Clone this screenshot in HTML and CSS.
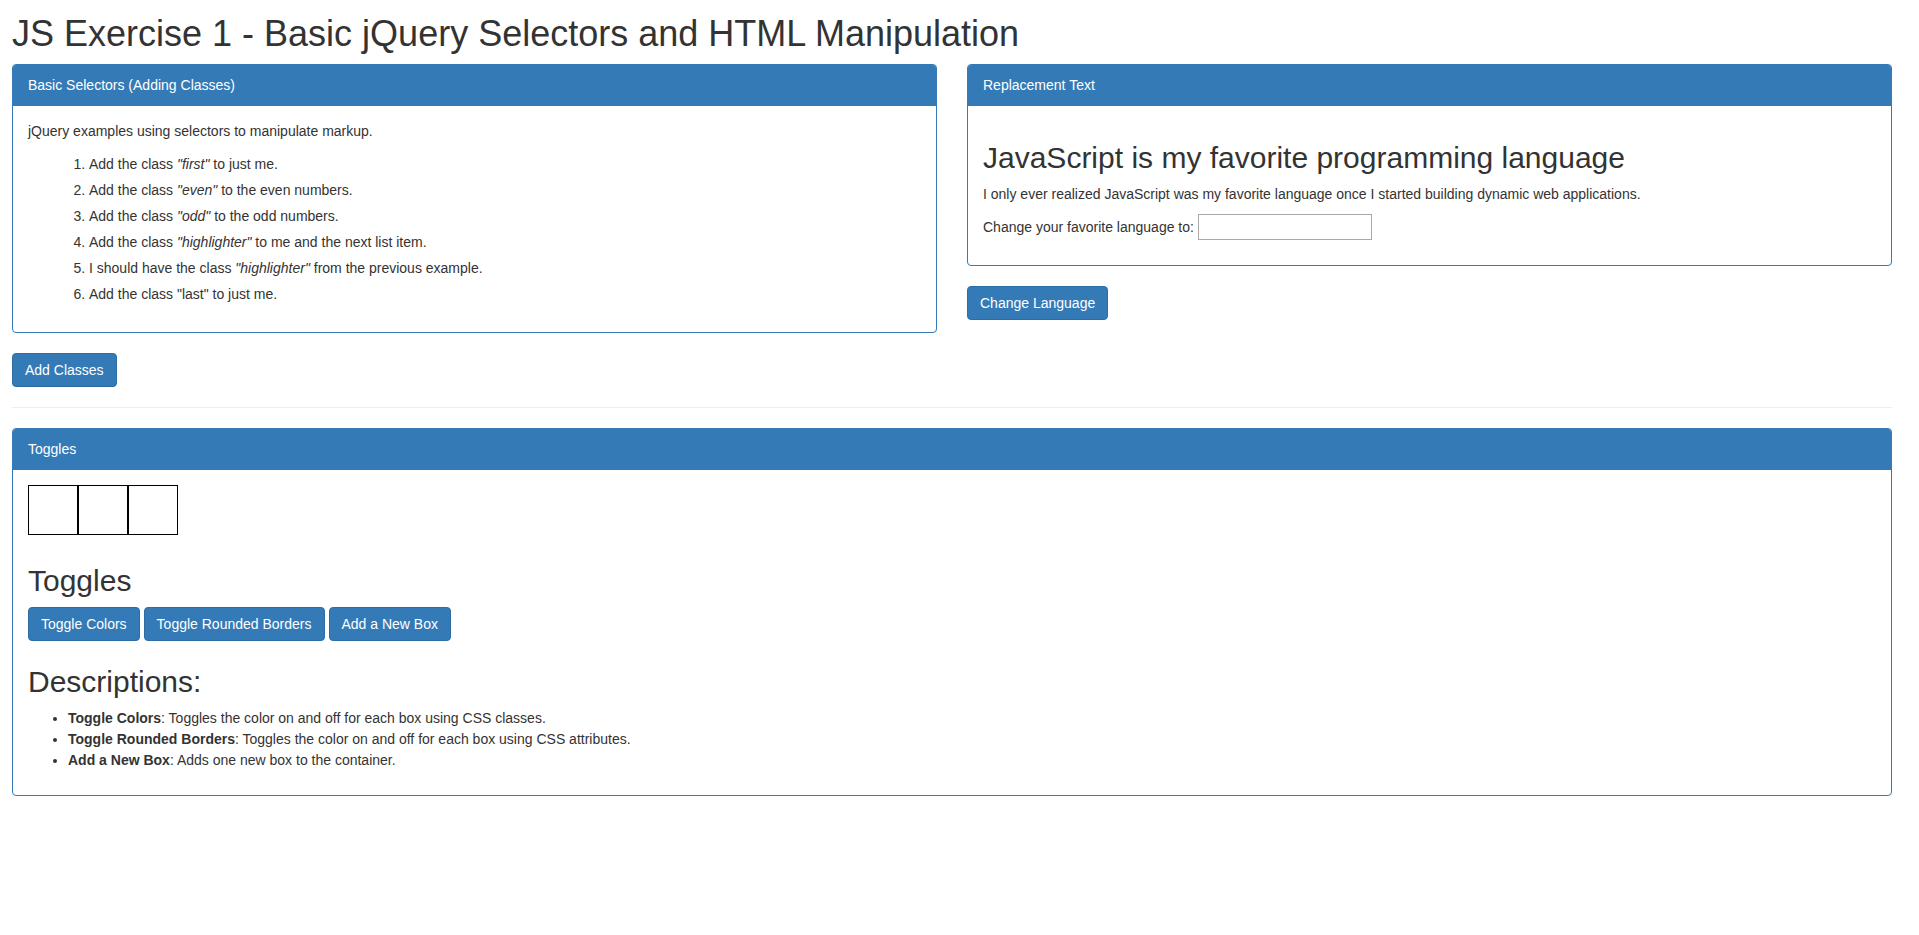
FILE: index.html
```html
<!DOCTYPE html>
<html lang="en">
<head>
<meta charset="utf-8">
<title>JS Exercise 1</title>
<link rel="stylesheet" href="styles.css">
</head>
<body>
<div class="page">
  <h1 class="title">JS Exercise 1 - Basic jQuery Selectors and HTML Manipulation</h1>
  <div class="row">
    <div class="col">
      <div class="panel">
        <div class="panel-heading">Basic Selectors (Adding Classes)</div>
        <div class="panel-body">
          <p class="intro">jQuery examples using selectors to manipulate markup.</p>
          <ol class="steps">
            <li>Add the class <em>"first"</em> to just me.</li>
            <li>Add the class <em>"even"</em> to the even numbers.</li>
            <li>Add the class <em>"odd"</em> to the odd numbers.</li>
            <li>Add the class <em>"highlighter"</em> to me and the next list item.</li>
            <li>I should have the class <em>"highlighter"</em> from the previous example.</li>
            <li>Add the class "last" to just me.</li>
          </ol>
        </div>
      </div>
      <button class="btn" type="button">Add Classes</button>
    </div>
    <div class="col">
      <div class="panel">
        <div class="panel-heading">Replacement Text</div>
        <div class="panel-body">
          <h2 class="heading">JavaScript is my favorite programming language</h2>
          <p class="intro">I only ever realized JavaScript was my favorite language once I started building dynamic web applications.</p>
          <div class="lang-row">
            <label class="lang-label" for="lang">Change your favorite language to:</label>
            <input class="lang-input" id="lang" type="text">
          </div>
        </div>
      </div>
      <button class="btn" type="button">Change Language</button>
    </div>
  </div>
  <hr class="divider">
  <div class="panel">
    <div class="panel-heading">Toggles</div>
    <div class="panel-body">
      <div class="boxes">
        <div class="box"></div>
        <div class="box"></div>
        <div class="box"></div>
      </div>
      <h2 class="heading">Toggles</h2>
      <div class="btn-row">
        <button class="btn" type="button">Toggle Colors</button>
        <button class="btn" type="button">Toggle Rounded Borders</button>
        <button class="btn" type="button">Add a New Box</button>
      </div>
      <h2 class="heading">Descriptions:</h2>
      <ul class="desc">
        <li><strong>Toggle Colors</strong>: Toggles the color on and off for each box using CSS classes.</li>
        <li><strong>Toggle Rounded Borders</strong>: Toggles the color on and off for each box using CSS attributes.</li>
        <li><strong>Add a New Box</strong>: Adds one new box to the container.</li>
      </ul>
    </div>
  </div>
</div>
</body>
</html>
```
FILE: styles.css
```css
* {
  box-sizing: border-box;
}

html, body {
  margin: 0;
  padding: 0;
  background: #fff;
}

body {
  font-family: "Liberation Sans", Arial, Helvetica, sans-serif;
  font-size: 14px;
  line-height: 20px;
  color: #333;
}

.page {
  padding: 0 27px 0 12px;
}

.title {
  font-size: 36px;
  font-weight: 500;
  line-height: 1.1;
  margin: 14px 0 10px;
}

.row {
  display: grid;
  grid-template-columns: 1fr 1fr;
  column-gap: 30px;
  align-items: start;
}

.panel {
  border: 1px solid #337ab7;
  border-radius: 4px;
  margin-bottom: 20px;
  background: #fff;
}

.panel-heading {
  background: #337ab7;
  color: #fff;
  padding: 10px 15px;
  border-bottom: 1px solid #337ab7;
  border-radius: 3px 3px 0 0;
}

.panel-body {
  padding: 15px;
}

.intro {
  margin: 0 0 10px;
}

.steps {
  margin: 0 0 10px;
  padding-left: 61px;
}

.steps li {
  padding: 3px 0;
}

.heading {
  font-size: 30px;
  font-weight: 500;
  line-height: 1.1;
  margin: 20px 0 10px;
}

.lang-row {
  display: flex;
  align-items: center;
  gap: 4px;
  height: 26px;
  margin-bottom: 10px;
}

.lang-input {
  width: 174px;
  height: 26px;
  border: 1px solid #a9a9a9;
  padding: 1px 2px;
  font: inherit;
  margin: 0;
}

.btn {
  display: inline-block;
  font-family: inherit;
  font-size: 14px;
  line-height: 20px;
  padding: 6px 12px;
  border: 1px solid #2e6da4;
  border-radius: 4px;
  background: #337ab7;
  color: #fff;
  margin: 0;
  cursor: pointer;
  vertical-align: middle;
}

.divider {
  margin: 20px 0;
  border: 0;
  border-top: 1px solid #eee;
  height: 0;
}

.boxes {
  display: flex;
  margin-bottom: 29px;
}

.box {
  width: 50px;
  height: 50px;
  border: 1px solid #000;
}

.btn-row {
  display: flex;
  gap: 4px;
  padding-bottom: 4px;
}

.desc {
  margin: 0 0 9px;
  padding-left: 40px;
}

.desc li {
  line-height: 21px;
}
```
